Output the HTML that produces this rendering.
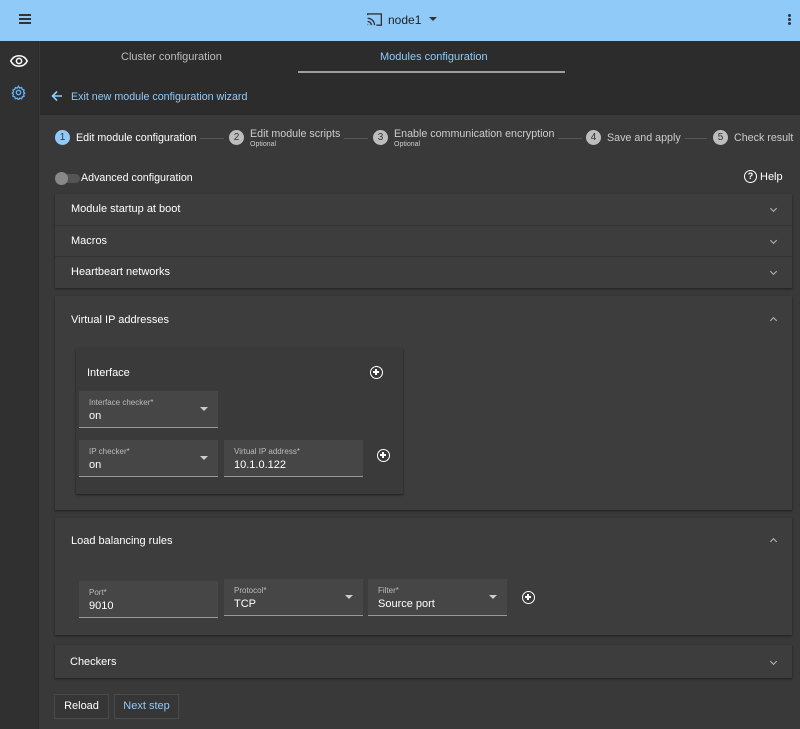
<!DOCTYPE html>
<html><head><style>
*{box-sizing:border-box;margin:0;padding:0}
body{width:800px;height:729px;overflow:hidden;background:#393939;font-family:"Liberation Sans",sans-serif;color:#fff;font-size:11px;position:relative}
.abs{position:absolute}
.top{left:0;top:0;width:800px;height:41px;background:#90caf9}
.side{left:0;top:41px;width:39px;height:688px;background:#303030;border-right:1px solid #2a2a2a}
.hdr{left:40px;top:41px;width:760px;height:74px;background:#2c2c2c}
.panel{background:#3d3d3d;box-shadow:0 1px 2px rgba(0,0,0,.5)}
.chev{position:absolute;right:16px;width:5px;height:5px;border-right:1.2px solid #bbb;border-bottom:1.2px solid #bbb;transform:rotate(45deg)}
.up{transform:rotate(-135deg)}
.field{position:absolute;background:#464646;border-bottom:1px solid #999;height:37px}
.field .l{position:absolute;left:10px;top:7px;font-size:8px;color:#bbb}
.field .v{position:absolute;left:10px;top:19px;font-size:11px}
.field .dd{position:absolute;right:10px;top:16px;border:4px solid transparent;border-top:4px solid #ccc}
.step{position:absolute;top:130px;width:15px;height:15px;border-radius:50%;background:#bdbdbd;color:#333;font-size:10px;text-align:center;line-height:15px}
.sl{font-size:10.7px}
.line{position:absolute;top:138px;height:1px;background:#555}
.plus{position:absolute;width:13px;height:13px;border:1.5px solid #fff;border-radius:50%}
.plus:before{content:"";position:absolute;left:2px;top:4.3px;width:6px;height:1.5px;background:#fff}
.plus:after{content:"";position:absolute;left:4.3px;top:2px;width:1.5px;height:6px;background:#fff}
.btn{position:absolute;top:694px;height:25px;border:1px solid #4a4a4a;background:#363636;font-size:11px;line-height:23px;text-align:center}
</style></head><body>
<div class="abs top">
 <div class="abs" style="left:19px;top:14px;width:12px;height:2px;background:#333;box-shadow:0 4px 0 #333,0 8px 0 #333"></div>
 <svg class="abs" style="left:367px;top:13px" width="15" height="13" viewBox="0 0 24 20"><path d="M1 3V1h22v18h-8M1 8a11 11 0 0 1 11 11M1 13a6 6 0 0 1 6 6M1 18h1" fill="none" stroke="#333" stroke-width="2.2"/></svg>
 <div class="abs" style="left:388px;top:13px;font-size:12px;color:#222">node1</div>
 <div class="abs" style="left:429px;top:17px;border:4px solid transparent;border-top:4px solid #333"></div>
 <div class="abs" style="left:788px;top:14px;width:3px;height:3px;background:#333;border-radius:50%;box-shadow:0 4px 0 #333,0 8px 0 #333"></div>
</div>
<div class="abs side">
 <svg class="abs" style="left:10px;top:14px" width="18" height="12" viewBox="0 0 24 16"><path d="M1 8C4 2 8 1 12 1s8 1 11 7c-3 6-7 7-11 7S4 14 1 8z" fill="none" stroke="#fff" stroke-width="2"/><circle cx="12" cy="8" r="3.5" fill="none" stroke="#fff" stroke-width="2"/></svg>
 <svg class="abs" style="left:11px;top:44px" width="15" height="15" viewBox="0 0 24 24"><circle cx="12" cy="12" r="3.5" fill="none" stroke="#64b5f6" stroke-width="2.2"/><path d="M12 2l2 3 3-1 1 3 3 1-1 3 2 2-2 2 1 3-3 1-1 3-3-1-2 3-2-3-3 1-1-3-3-1 1-3-2-2 2-2-1-3 3-1 1-3 3 1z" fill="none" stroke="#64b5f6" stroke-width="2"/></svg>
</div>
<div class="abs hdr">
 <div class="abs" style="left:81px;top:10px;font-size:11px;color:#bdbdbd">Cluster configuration</div>
 <div class="abs" style="left:340px;top:10px;font-size:11px;color:#90caf9">Modules configuration</div>
 <div class="abs" style="left:258px;top:30px;width:267px;height:2px;background:#9e9e9e"></div>
 <svg class="abs" style="left:11px;top:49px" width="12" height="12" viewBox="0 0 12 12"><path d="M11 6H1.5M6 1.5L1.5 6 6 10.5" fill="none" stroke="#90caf9" stroke-width="1.6"/></svg>
 <div class="abs" style="left:31px;top:50px;color:#90caf9;font-size:10.7px">Exit new module configuration wizard</div>
</div>
<div class="step" style="left:55px;background:#90caf9">1</div>
<div class="abs sl" style="left:76px;top:132px">Edit module configuration</div>
<div class="line" style="left:200px;width:24px"></div>
<div class="step" style="left:229px">2</div>
<div class="abs sl" style="left:250px;top:128px;color:#ccc">Edit module scripts</div>
<div class="abs" style="left:250px;top:141px;font-size:7px;color:#ccc">Optional</div>
<div class="line" style="left:344px;width:24px"></div>
<div class="step" style="left:373px">3</div>
<div class="abs sl" style="left:394px;top:128px;color:#ccc">Enable communication encryption</div>
<div class="abs" style="left:394px;top:141px;font-size:7px;color:#ccc">Optional</div>
<div class="line" style="left:558px;width:24px"></div>
<div class="step" style="left:586px">4</div>
<div class="abs sl" style="left:607px;top:132px;color:#ccc">Save and apply</div>
<div class="line" style="left:685px;width:22px"></div>
<div class="step" style="left:713px">5</div>
<div class="abs sl" style="left:734px;top:132px;color:#ccc">Check result</div>

<div class="abs" style="left:56px;top:174px;width:24px;height:9px;border-radius:5px;background:#555"></div>
<div class="abs" style="left:55px;top:172px;width:13px;height:13px;border-radius:50%;background:#888"></div>
<div class="abs sl" style="left:81px;top:172px">Advanced configuration</div>
<div class="abs" style="left:744px;top:170px;width:13px;height:13px;border:1.5px solid #fff;border-radius:50%;font-size:9px;text-align:center;line-height:10px;font-weight:bold">?</div>
<div class="abs" style="left:760px;top:171px">Help</div>

<div class="abs panel" style="left:55px;top:194px;width:737px;height:94px">
 <div class="abs" style="left:16px;top:9px">Module startup at boot</div><div class="chev" style="top:12px"></div>
 <div class="abs" style="left:0;top:31px;width:737px;height:1px;background:#333"></div>
 <div class="abs" style="left:16px;top:41px">Macros</div><div class="chev" style="top:44px"></div>
 <div class="abs" style="left:0;top:62px;width:737px;height:1px;background:#333"></div>
 <div class="abs" style="left:16px;top:72px">Heartbeart networks</div><div class="chev" style="top:75px"></div>
</div>
<div class="abs panel" style="left:55px;top:296px;width:737px;height:214px">
 <div class="abs" style="left:16px;top:18px">Virtual IP addresses</div><div class="chev up" style="top:22px"></div>
 <div class="abs panel" style="left:21px;top:52px;width:327px;height:146px;background:#3a3a3a">
  <div class="abs" style="left:11px;top:19px">Interface</div>
  <div class="plus" style="left:294px;top:18px"></div>
  <div class="field" style="left:3px;top:43px;width:139px"><div class="l">Interface checker*</div><div class="v">on</div><div class="dd"></div></div>
  <div class="field" style="left:3px;top:92px;width:139px"><div class="l">IP checker*</div><div class="v">on</div><div class="dd"></div></div>
  <div class="field" style="left:148px;top:92px;width:139px"><div class="l">Virtual IP address*</div><div class="v">10.1.0.122</div></div>
  <div class="plus" style="left:301px;top:101px"></div>
 </div>
</div>
<div class="abs panel" style="left:55px;top:518px;width:737px;height:117px">
 <div class="abs" style="left:16px;top:17px">Load balancing rules</div><div class="chev up" style="top:21px"></div>
 <div class="field" style="left:24px;top:63px;width:139px"><div class="l">Port*</div><div class="v">9010</div></div>
 <div class="field" style="left:169px;top:61px;width:139px"><div class="l">Protocol*</div><div class="v">TCP</div><div class="dd"></div></div>
 <div class="field" style="left:313px;top:61px;width:139px"><div class="l">Filter*</div><div class="v">Source port</div><div class="dd"></div></div>
 <div class="plus" style="left:467px;top:73px"></div>
</div>
<div class="abs panel" style="left:55px;top:645px;width:737px;height:33px">
 <div class="abs" style="left:15px;top:11px">Checkers</div><div class="chev" style="top:14px"></div>
</div>
<div class="btn" style="left:54px;width:55px">Reload</div>
<div class="btn" style="left:114px;width:65px;color:#90caf9">Next step</div>
</body></html>
